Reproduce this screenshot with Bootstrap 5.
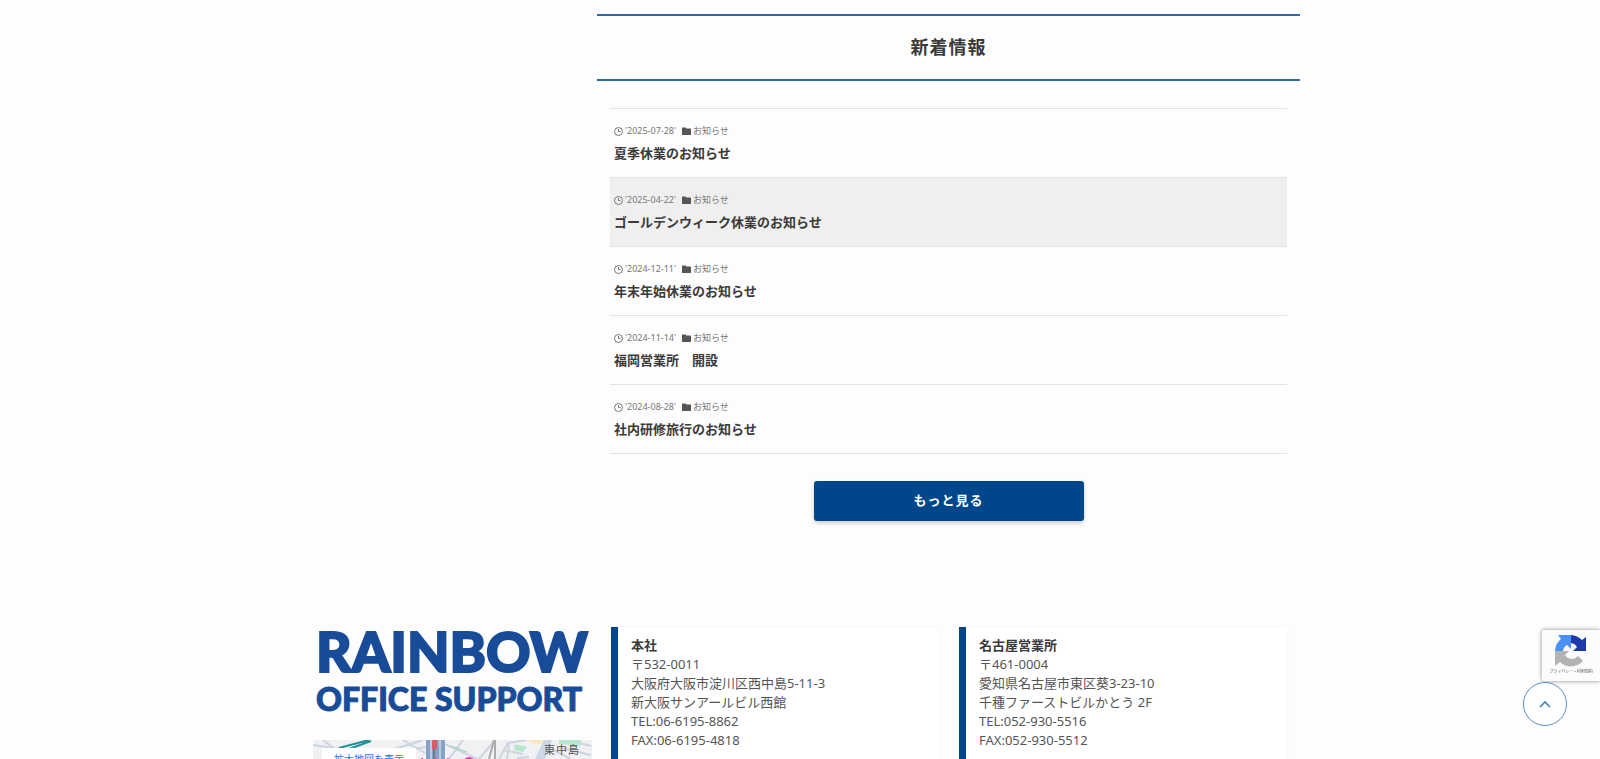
<!DOCTYPE html>
<html lang="ja">
<head>
<meta charset="utf-8">
<meta name="viewport" content="width=device-width, initial-scale=1">
<title>RAINBOW OFFICE SUPPORT</title>
<link href="https://cdn.jsdelivr.net/npm/bootstrap@5.3.0/dist/css/bootstrap.min.css" rel="stylesheet">
<style>
:root { --brand: #00468b; --line: #3069a6; }
body { font-family: "Noto Sans", "Noto Sans CJK JP", sans-serif; font-size: 13px; color: #333; background: #fdfdfd; }
.page-wrap { max-width: 1000px; }
.page-grid { display: grid; grid-template-columns: 297fr 703fr; }
.news { grid-column: 2; padding-top: 14px; }
.section-title { border-top: 2px solid var(--line); border-bottom: 2px solid var(--line); font-size: 18px; line-height: 27px; padding: 18px 0; font-weight: 700; letter-spacing: 1px; color: #3a3a3a; }
.news-list { margin: 27px 13px 0; border-top: 1px solid #e3e3e3; }
.news-item { display: block; height: 69px; padding: 15px 4px 0; border-bottom: 1px solid #e3e3e3; color: #3a3a3a; text-decoration: none; }
.news-item.current { background: #efefef; }
.meta { font-size: 9px; line-height: 14px; color: #777; gap: 2px; }
.meta svg { width: 9px; height: 9px; }
.news-name { font-size: 13px; line-height: 18px; margin: 6px 0 0; font-weight: 700; }
.more-btn { width: 270px; height: 40px; margin-top: 27px; background: var(--brand); color: #fff; border-radius: 3px; font-size: 13px; font-weight: 700; letter-spacing: 1px; box-shadow: 0 2px 4px #0003; }
.more-btn:hover { background: var(--line); color: #fff; }
.foot { margin-top: 106px; }
.brand-col { padding: 0 5px 0 13px; }
.logo { color: #194c98; font-family: Lato, sans-serif; font-weight: 900; white-space: nowrap; text-decoration: none; padding-left: 3px; }
.logo-big { font-size: 55px; line-height: 48px; -webkit-text-stroke: 2px #194c98; }
.logo-small { font-size: 32px; line-height: 48px; -webkit-text-stroke: 1px #194c98; }
.map { margin-top: 17px; background: #f1f0f2; min-height: 19px; }
.map > svg { top: 0; left: 0; }
.map-link { left: 9px; top: 8px; width: 94px; height: 30px; background: #fff; color: #1a73e8; text-align: center; text-decoration: none; font-size: 10px; line-height: 22px; }
.map-place { right: 12px; top: 0; font-size: 11px; line-height: 20px; letter-spacing: 1px; color: #555; }
.offices { padding: 0 13px 0 14px; gap: 20px; }
.office { border-left: 7px solid var(--brand); background: #fff; padding: 9px 13px; line-height: 19px; box-shadow: 0 0 3px #0000000c; color: #555; }
.office h3 { font-size: 13px; line-height: 19px; margin: 0; font-weight: 700; color: #3a3a3a; }
.captcha { right: 0; bottom: 78px; width: 58px; height: 51px; padding-top: 5px; background: #fcfcfc; border-radius: 2px 0 0 2px; box-shadow: 0 0 4px #888; font-size: 4px; line-height: 10px; color: #555; }
.to-top { right: 33px; bottom: 33px; width: 44px; height: 44px; border: 1px solid #5b8cbb; background: #fff; }
</style>
<script src="https://cdn.jsdelivr.net/npm/bootstrap@5.3.0/dist/js/bootstrap.bundle.min.js"></script>
</head>
<body>
<svg class="d-none">
<symbol id="clock" viewBox="0 0 18 18"><circle cx="9" cy="9" r="8" fill="none" stroke="#777" stroke-width="2"/><path d="M9 4v5h4" fill="none" stroke="#777" stroke-width="2"/></symbol>
<symbol id="folder" viewBox="0 0 18 18"><path d="M0 2q0-1 1-1h6l2 2h8q1 0 1 1v11q0 1-1 1H1q-1 0-1-1z" fill="#555"/></symbol>
</svg>
<div class="page-wrap mx-auto min-vh-100 d-flex flex-column">
<main class="page-grid">
<section class="news">
<h2 class="section-title text-center mb-0">新着情報</h2>
<div class="news-list">
<a class="news-item" href="#"><div class="meta d-flex align-items-center"><svg><use href="#clock"/></svg><time>'2025-07-28'</time><svg class="ms-1"><use href="#folder"/></svg><span>お知らせ</span></div><h3 class="news-name">夏季休業のお知らせ</h3></a>
<a class="news-item current" href="#"><div class="meta d-flex align-items-center"><svg><use href="#clock"/></svg><time>'2025-04-22'</time><svg class="ms-1"><use href="#folder"/></svg><span>お知らせ</span></div><h3 class="news-name">ゴールデンウィーク休業のお知らせ</h3></a>
<a class="news-item" href="#"><div class="meta d-flex align-items-center"><svg><use href="#clock"/></svg><time>'2024-12-11'</time><svg class="ms-1"><use href="#folder"/></svg><span>お知らせ</span></div><h3 class="news-name">年末年始休業のお知らせ</h3></a>
<a class="news-item" href="#"><div class="meta d-flex align-items-center"><svg><use href="#clock"/></svg><time>'2024-11-14'</time><svg class="ms-1"><use href="#folder"/></svg><span>お知らせ</span></div><h3 class="news-name">福岡営業所　開設</h3></a>
<a class="news-item" href="#"><div class="meta d-flex align-items-center"><svg><use href="#clock"/></svg><time>'2024-08-28'</time><svg class="ms-1"><use href="#folder"/></svg><span>お知らせ</span></div><h3 class="news-name">社内研修旅行のお知らせ</h3></a>
</div>
<div class="text-center"><button type="button" class="btn more-btn p-0">もっと見る</button></div>
</section>
</main>
<footer class="foot page-grid flex-grow-1">
<div class="brand-col d-flex flex-column">
<a class="logo" href="#"><div class="logo-big">RAINBOW</div><div class="logo-small">OFFICE SUPPORT</div></a>
<div class="map position-relative overflow-hidden flex-grow-1">
<svg class="position-absolute" width="279" height="19" viewBox="0 0 279 19">
<g fill="none" stroke="#ccd4df" stroke-width="2"><path d="M0 5l28 4M10 0l16 12M72 12L110 0M90 0l22 13M84 11l30-4M132 4l32 15M150 0l-14 19M166 19L182 0M186 19l9-16 18-3M196 4l-2 15M190 10l20 4M204 18l12-1M244 7l34 8M240 10l18 9M256 0l22 6"/></g>
<path d="M202 4l12 3-4 5-9-2zM246 0h22v6l-22-2z" fill="#b7e8cf"/>
<path d="M215 0h15l-2 4-10-1z" fill="#fae5bf"/>
<path d="M222 19L231 0h8l-7 19z" fill="#cbd7e6"/>
<path d="M26 8L56 0M36 9l22-8" stroke="#22929a" stroke-width="2" fill="none"/>
<path d="M113 0h19v19h-19z" fill="#86a2c7"/><path d="M118 0v19M127 0v19" stroke="#bdcbe0" stroke-width="2"/><path d="M119 0h5v9h-5z" fill="#db5b65"/><path d="M121 9v10" stroke="#555"/>
<path d="M176 19l5-19M182 19V0" stroke="#aaa" stroke-width="2"/>
<path d="M138 6l16 6" stroke="#8ed6b3"/>
<circle cx="156" cy="23" r="6" fill="#e93fb7"/><path d="M109 18v1m14-1v1m12-1v1" stroke="#d956bf" stroke-width="2"/>
</svg>
<a class="map-link position-absolute" href="#">拡大地図を表示</a>
<span class="map-place position-absolute">東中島</span>
</div>
</div>
<div class="offices d-flex">
<address class="office flex-fill w-50 mb-0"><h3>本社</h3>〒532-0011<br>大阪府大阪市淀川区西中島5-11-3<br>新大阪サンアールビル西館<br>TEL:06-6195-8862<br>FAX:06-6195-4818</address>
<address class="office flex-fill w-50 mb-0"><h3>名古屋営業所</h3>〒461-0004<br>愛知県名古屋市東区葵3-23-10<br>千種ファーストビルかとう 2F<br>TEL:052-930-5516<br>FAX:052-930-5512</address>
</div>
</footer>
</div>
<aside class="captcha position-fixed d-flex flex-column align-items-center">
<svg width="32" height="32" viewBox="0 0 32 32">
<path d="M16 0a16 16 0 0 1 11 5l4-3v14H18l4-4a8 8 0 0 0-6-4z" fill="#1c3aa9"/>
<path d="M3 0h13v14l-4-4a8 8 0 0 0-4 6H0A16 16 0 0 1 6 4z" fill="#4a90f5"/>
<path d="M0 16h14l-4 4a8 8 0 0 0 13 1l5 5A16 16 0 0 1 5 27l-5 4z" fill="#b3b3b3"/>
</svg>
<span class="text-nowrap">プライバシー • 利用規約</span>
</aside>
<a class="to-top position-fixed rounded-circle d-flex align-items-center justify-content-center" href="#" aria-label="ページの先頭へ"><svg width="12" height="8" viewBox="0 0 12 8"><path d="M1 7l5-5 5 5" fill="none" stroke="#4a80b5" stroke-width="1.6"/></svg></a>
</body>
</html>
